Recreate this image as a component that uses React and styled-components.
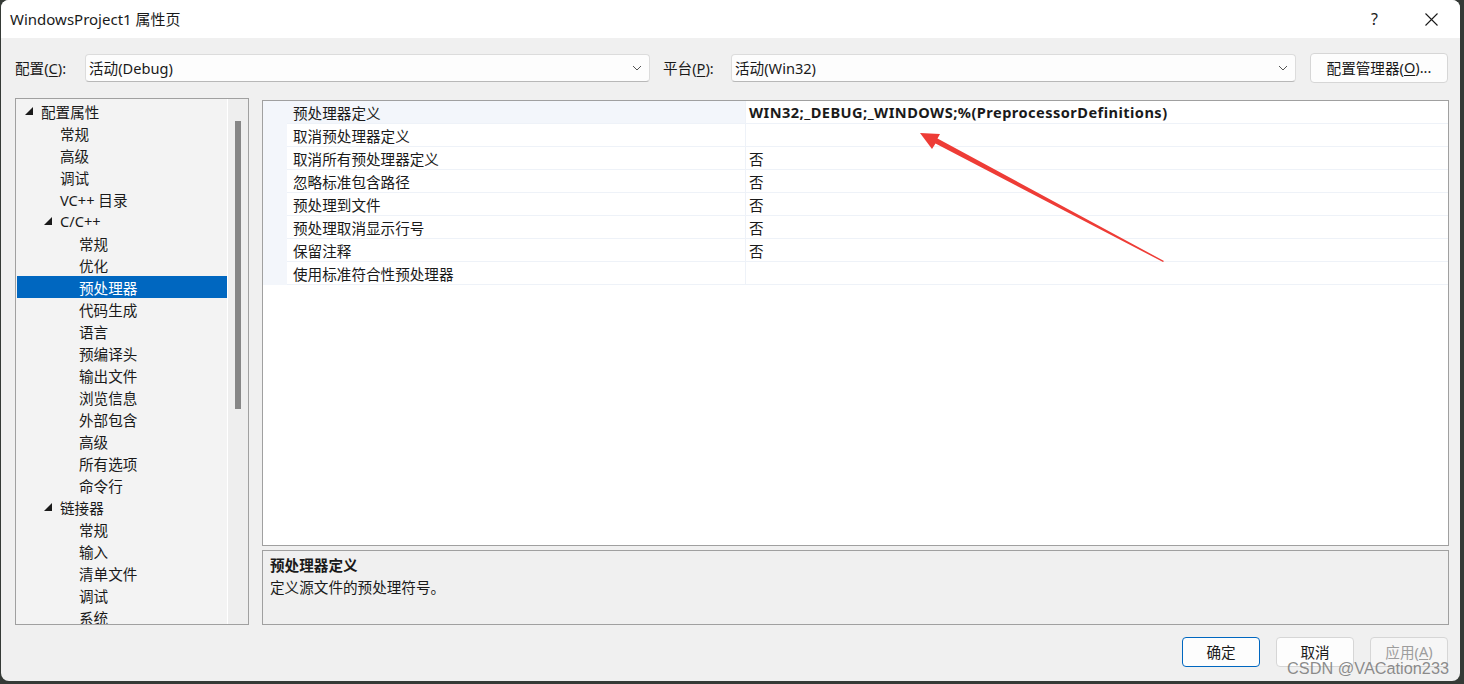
import React from "react";
import styled, { createGlobalStyle } from "styled-components";

const GlobalStyle = createGlobalStyle`
  html, body { margin: 0; padding: 0; }
  body {
    background: #353a36;
    font-family: "Noto Sans", "Noto Sans CJK SC", sans-serif;
    font-size: 14.6px;
    color: #1a1a1a;
  }
  u { text-underline-offset: 2px; }
`;

const Frame = styled.div`
  width: 1464px;
  height: 684px;
  padding: 0 4px 3px 1px;
  box-sizing: border-box;
  position: relative;
  overflow: hidden;
`;

const Win = styled.div`
  height: 100%;
  background: #f0f0f0;
  border-radius: 8px;
  overflow: hidden;
  display: flex;
  flex-direction: column;
`;

const TitleBar = styled.div`
  height: 38px;
  flex: none;
  background: #ffffff;
  display: flex;
  align-items: center;
  padding-left: 9px;
  font-size: 15px;
`;

const TitleText = styled.div`
  flex: 1;
  margin-top: -1px;
`;

const CaptionBtn = styled.div`
  width: 57px;
  height: 38px;
  display: flex;
  align-items: center;
  justify-content: center;
  font-size: 16px;
  color: #1a1a1a;
`;

const ConfigRow = styled.div`
  display: flex;
  align-items: center;
  padding: 16px 11px 0 14px;
  height: 28px;
  flex: none;
`;

const Label = styled.div`
  width: ${p => p.$w}px;
  flex: none;
  margin-top: -2px;
`;

const Combo = styled.div`
  width: 565px;
  height: 28px;
  box-sizing: border-box;
  flex: none;
  background: #fdfdfd;
  border: 1px solid #dcdcdc;
  border-bottom-color: #b8b8b8;
  border-radius: 4px;
  display: flex;
  align-items: center;
  padding: 0 7px 0 3px;
  margin-right: ${p => p.$mr || 0}px;
`;

const ComboText = styled.div`
  flex: 1;
  margin-top: -2px;
`;

const PushBtn = styled.div`
  width: ${p => p.$w || 78}px;
  height: ${p => p.$h || 30}px;
  box-sizing: border-box;
  border: 1px solid ${p => (p.$primary ? "#0067c0" : "#d6d6d6")};
  border-radius: 4px;
  background: ${p => (p.$disabled ? "#f6f6f6" : "#fdfdfd")};
  color: ${p => (p.$disabled ? "#9d9d9d" : "#1a1a1a")};
  display: flex;
  align-items: center;
  justify-content: center;
  flex: none;
  padding-bottom: 2px;
`;

const Main = styled.div`
  flex: 1;
  display: flex;
  gap: 13px;
  padding: 16px 11px 0 14px;
  min-height: 0;
`;

const TreeBox = styled.div`
  width: 234px;
  height: 527px;
  box-sizing: border-box;
  border: 1px solid #a0a0a0;
  background: #f3f3f3;
  display: flex;
  flex: none;
  overflow: hidden;
`;

const TreeList = styled.div`
  flex: 1;
  padding: 1px 0 0 1px;
`;

const TreeRow = styled.div`
  height: 22px;
  display: flex;
  align-items: center;
  padding-left: ${p => 8 + p.$level * 19}px;
  background: ${p => (p.$sel ? "#0067c0" : "transparent")};
  color: ${p => (p.$sel ? "#ffffff" : "#1a1a1a")};
  white-space: nowrap;
`;

const Expander = styled.div`
  width: 16px;
  height: 22px;
  display: flex;
  align-items: center;
  flex: none;
`;

const ScrollTrack = styled.div`
  width: 21px;
  flex: none;
  background: #eeeeee;
  border-left: 1px solid #ffffff;
  display: flex;
  justify-content: center;
  padding-top: 22px;
  box-sizing: border-box;
`;

const Thumb = styled.div`
  width: 6px;
  height: 288px;
  background: #868686;
`;

const RightCol = styled.div`
  flex: 1;
  display: flex;
  flex-direction: column;
  gap: 4px;
  padding-top: 2px;
`;

const Grid = styled.div`
  height: 446px;
  box-sizing: border-box;
  border: 1px solid #a0a0a0;
  background: #ffffff;
  flex: none;
`;

const GridRow = styled.div`
  display: flex;
  height: 23px;
`;

const Gutter = styled.div`
  width: 24px;
  flex: none;
  background: #f3f6fb;
`;

const NameCell = styled.div`
  width: 452px;
  flex: none;
  padding-left: 6px;
  display: flex;
  align-items: center;
  background: ${p => (p.$sel ? "#f3f6fb" : "#ffffff")};
  border-bottom: 1px solid #eef2f8;
  border-right: 1px solid #eef2f8;
`;

const ValueCell = styled.div`
  flex: 1;
  padding-left: 3px;
  display: flex;
  align-items: center;
  font-weight: ${p => (p.$bold ? 700 : 400)};
  letter-spacing: ${p => (p.$bold ? "0.45px" : "0")};
  border-bottom: 1px solid #eef2f8;
  white-space: nowrap;
`;

const DescBox = styled.div`
  height: 75px;
  box-sizing: border-box;
  border: 1px solid #a0a0a0;
  background: #f0f0f0;
  padding: 3px 7px;
  flex: none;
`;

const DescTitle = styled.div`
  font-weight: 700;
  height: 22px;
  line-height: 22px;
`;

const DescText = styled.div`
  height: 22px;
  line-height: 22px;
`;

const Footer = styled.div`
  display: flex;
  justify-content: flex-end;
  gap: 16px;
  padding: 12px 12px 14px 0;
  flex: none;
`;

const Watermark = styled.div`
  position: absolute;
  right: 15px;
  bottom: 6px;
  font-family: "Liberation Sans", Arial, sans-serif;
  font-size: 16.3px;
  color: rgba(120, 120, 120, 0.85);
  pointer-events: none;
`;

const ArrowLayer = styled.svg`
  position: absolute;
  left: 0;
  top: 0;
  pointer-events: none;
`;

const Chevron = () => (
  <svg width="10" height="6" viewBox="0 0 10 6">
    <path d="M1 1 L5 5 L9 1" fill="none" stroke="#555" strokeWidth="1" />
  </svg>
);

const Tri = () => (
  <svg width="8" height="8" viewBox="0 0 8 8">
    <polygon points="8,0 8,8 0,8" fill="#1a1a1a" />
  </svg>
);

const tree = [
  [0, "配置属性", true],
  [1, "常规"],
  [1, "高级"],
  [1, "调试"],
  [1, "VC++ 目录"],
  [1, "C/C++", true],
  [2, "常规"],
  [2, "优化"],
  [2, "预处理器", false, true],
  [2, "代码生成"],
  [2, "语言"],
  [2, "预编译头"],
  [2, "输出文件"],
  [2, "浏览信息"],
  [2, "外部包含"],
  [2, "高级"],
  [2, "所有选项"],
  [2, "命令行"],
  [1, "链接器", true],
  [2, "常规"],
  [2, "输入"],
  [2, "清单文件"],
  [2, "调试"],
  [2, "系统"],
];

const props = [
  ["预处理器定义", "WIN32;_DEBUG;_WINDOWS;%(PreprocessorDefinitions)"],
  ["取消预处理器定义", ""],
  ["取消所有预处理器定义", "否"],
  ["忽略标准包含路径", "否"],
  ["预处理到文件", "否"],
  ["预处理取消显示行号", "否"],
  ["保留注释", "否"],
  ["使用标准符合性预处理器", ""],
];

export default function App() {
  return (
    <Frame>
      <GlobalStyle />
      <Win>
        <TitleBar>
          <TitleText>WindowsProject1 属性页</TitleText>
          <CaptionBtn>?</CaptionBtn>
          <CaptionBtn>
            <svg width="13" height="13" viewBox="0 0 13 13">
              <path d="M0.5 0.5 L12.5 12.5 M12.5 0.5 L0.5 12.5" stroke="#1a1a1a" strokeWidth="1.1" />
            </svg>
          </CaptionBtn>
        </TitleBar>

        <ConfigRow>
          <Label $w={70}>配置(<u>C</u>):</Label>
          <Combo $mr={13}>
            <ComboText>活动(Debug)</ComboText>
            <Chevron />
          </Combo>
          <Label $w={68}>平台(<u>P</u>):</Label>
          <Combo $mr={14}>
            <ComboText>活动(Win32)</ComboText>
            <Chevron />
          </Combo>
          <PushBtn $w={138} $h={30}>配置管理器(<u>O</u>)...</PushBtn>
        </ConfigRow>

        <Main>
          <TreeBox>
            <TreeList>
              {tree.map(([lvl, text, exp, sel], i) => (
                <TreeRow key={i} $level={lvl} $sel={sel}>
                  <Expander>{exp && <Tri />}</Expander>
                  {text}
                </TreeRow>
              ))}
            </TreeList>
            <ScrollTrack>
              <Thumb />
            </ScrollTrack>
          </TreeBox>

          <RightCol>
            <Grid>
              {props.map(([name, val], i) => (
                <GridRow key={i}>
                  <Gutter />
                  <NameCell $sel={i === 0}>{name}</NameCell>
                  <ValueCell $bold={i === 0}>{val}</ValueCell>
                </GridRow>
              ))}
            </Grid>
            <DescBox>
              <DescTitle>预处理器定义</DescTitle>
              <DescText>定义源文件的预处理符号。</DescText>
            </DescBox>
          </RightCol>
        </Main>

        <Footer>
          <PushBtn $primary>确定</PushBtn>
          <PushBtn>取消</PushBtn>
          <PushBtn $disabled>应用(<u>A</u>)</PushBtn>
        </Footer>
      </Win>

      <ArrowLayer width="1464" height="684" viewBox="0 0 1464 684">
        <polygon
          points="920,133 940,134 937.5,138.5 1164,261 1163,262 935.5,143.5 932,149"
          fill="#ee3c36"
        />
      </ArrowLayer>
      <Watermark>CSDN @VACation233</Watermark>
    </Frame>
  );
}
